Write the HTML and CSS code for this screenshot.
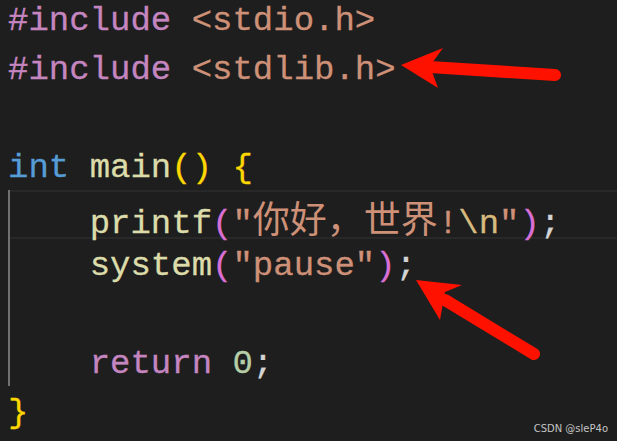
FILE: index.html
```html
<!DOCTYPE html>
<html lang="zh-CN">
<head>
<meta charset="utf-8">
<title>stdio</title>
<link rel="stylesheet" href="styles.css">
</head>
<body>
<div class="editor">
  <div class="code">
    <div class="ln"><span class="kw">#include</span> <span class="str">&lt;stdio.h&gt;</span></div>
    <div class="ln"><span class="kw">#include</span> <span class="str">&lt;stdlib.h&gt;</span></div>
    <div class="ln"> </div>
    <div class="ln"><span class="type">int</span> <span class="fn">main</span><span class="b1">()</span> <span class="b1">{</span></div>
    <div class="block">
      <div class="ln cur">    <span class="fn">printf</span><span class="b2">(</span><span class="str">"<span class="cjk">你好，世界</span>!</span><span class="esc">\n</span><span class="str">"</span><span class="b2">)</span><span class="pun">;</span></div>
      <div class="ln">    <span class="fn">system</span><span class="b2">(</span><span class="str">"pause"</span><span class="b2">)</span><span class="pun">;</span></div>
      <div class="ln"> </div>
      <div class="ln">    <span class="kw">return</span> <span class="num">0</span><span class="pun">;</span></div>
    </div>
    <div class="ln"><span class="b1">}</span></div>
  </div>
  <svg class="arrows" width="617" height="441" viewBox="0 0 617 441">
    <line x1="430" y1="67" x2="555" y2="75" stroke="#ff1100" stroke-width="12" stroke-linecap="round"/>
    <polygon points="401,65 443,48 430,66 438,88" fill="#ff1100"/>
    <line x1="445" y1="300" x2="534" y2="354" stroke="#ff1100" stroke-width="12" stroke-linecap="round"/>
    <polygon points="416,280 462,285 445,292 440,320" fill="#ff1100"/>
  </svg>
  <div class="mark">CSDN @sleP4o</div>
</div>
</body>
</html>
```
FILE: styles.css
```css
html, body {
  margin: 0;
  padding: 0;
  background: #1e1e1e;
}
.editor {
  position: relative;
  width: 617px;
  height: 441px;
  overflow: hidden;
  background: #1e1e1e;
}
.code {
  margin-top: -6px;
  font-family: "Liberation Mono", "Noto Sans CJK SC", monospace;
  font-size: 34px;
  color: #d4d4d4;
  -webkit-text-stroke: 0.3px currentColor;
}
.ln {
  height: 49px;
  line-height: 55px;
  padding-left: 8px;
  white-space: pre;
}
.block {
  margin-left: 8px;
  border-left: 2px solid #707070;
}
.block .ln {
  padding-left: 0;
  text-indent: -2px;
}
.cur {
  box-shadow: inset 0 2px #282828, inset 0 -2px #282828;
}
.kw { color: #c586c0; }
.str { color: #ce9178; }
.type { color: #569cd6; }
.fn { color: #dcdcaa; }
.b1 { color: #ffd700; }
.b2 { color: #da70d6; }
.esc { color: #d7ba7d; }
.num { color: #b5cea8; }
.pun { color: #d4d4d4; }
.cjk {
  font-family: "Noto Sans CJK SC", sans-serif;
  font-size: 37px;
  -webkit-text-stroke: 0;
}
.arrows {
  position: absolute;
  left: 0;
  top: 0;
}
.mark {
  position: absolute;
  right: 9px;
  bottom: 7px;
  font-family: "DejaVu Sans", sans-serif;
  font-size: 10px;
  color: #c4c4c4;
}
```
